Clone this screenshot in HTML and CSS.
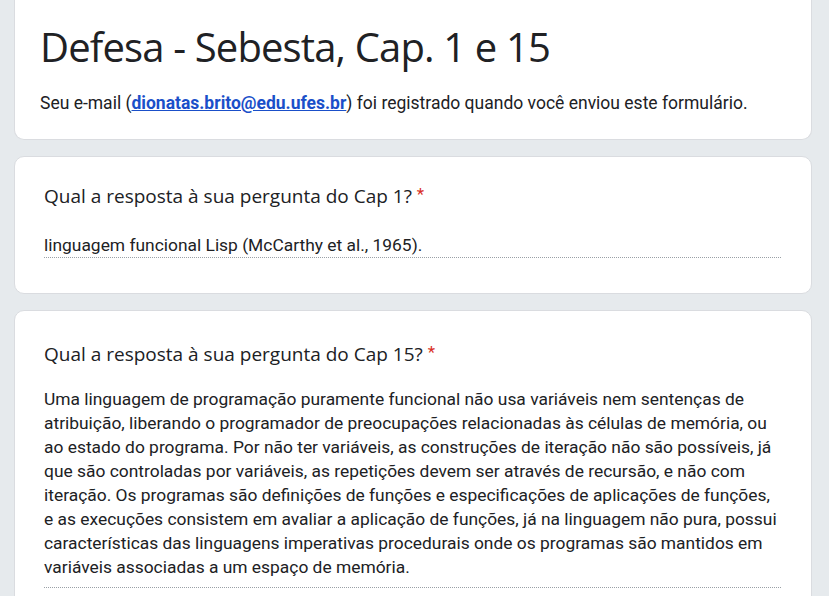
FILE: index.html
```html
<!DOCTYPE html>
<html lang="pt">
<head>
<meta charset="utf-8">
<title>Defesa - Sebesta, Cap. 1 e 15</title>
<link rel="stylesheet" href="styles.css">
</head>
<body>
<div class="page">
  <div class="card header-card">
    <h1 class="form-title">Defesa - Sebesta, Cap. 1 e 15</h1>
    <p class="form-note">Seu e-mail (<a class="email" href="#">dionatas.brito@edu.ufes.br</a>) foi registrado quando você enviou este formulário.</p>
  </div>
  <div class="card item-card">
    <div class="question">Qual a resposta à sua pergunta do Cap 1? <span class="req">*</span></div>
    <div class="answer answer-short">linguagem funcional Lisp (McCarthy et al., 1965).</div>
  </div>
  <div class="card item-card item-long">
    <div class="question">Qual a resposta à sua pergunta do Cap 15? <span class="req">*</span></div>
    <div class="answer answer-long">Uma linguagem de programação puramente funcional não usa variáveis nem sentenças de atribuição, liberando o programador de preocupações relacionadas às células de memória, ou ao estado do programa. Por não ter variáveis, as construções de iteração não são possíveis, já que são controladas por variáveis, as repetições devem ser através de recursão, e não com iteração. Os programas são definições de funções e especificações de aplicações de funções, e as execuções consistem em avaliar a aplicação de funções, já na linguagem não pura, possui características das linguagens imperativas procedurais onde os programas são mantidos em variáveis associadas a um espaço de memória.</div>
  </div>
</div>
</body>
</html>
```
FILE: styles.css
```css
html, body {
  margin: 0;
  padding: 0;
  background: #e6eaed;
  height: 100%;
  overflow: hidden;
}

.page {
  display: flex;
  flex-direction: column;
  gap: 16px;
  padding: 0 17px 0 14px;
}

.card {
  background: #ffffff;
  border: 1px solid #dadce0;
  border-radius: 10px;
}

.header-card {
  border-top: 0;
  border-top-left-radius: 0;
  border-top-right-radius: 0;
  padding: 22px 30px 24px 25px;
}

.form-title {
  margin: 0;
  font-family: "Open Sans", sans-serif;
  font-weight: 400;
  font-size: 40px;
  line-height: 50px;
  color: #202124;
  letter-spacing: -0.85px;
}

.form-note {
  margin: 19px 0 0;
  font-family: Roboto, "Liberation Sans", sans-serif;
  font-size: 17.5px;
  line-height: 24px;
  color: #202124;
}

.email {
  color: #1a4fc9;
  font-weight: 700;
  text-decoration: underline;
}

.item-card {
  padding: 24px 30px 35px 29px;
}

.question {
  font-family: "Open Sans", sans-serif;
  font-size: 19px;
  line-height: 30px;
  color: #202124;
}

.req {
  color: #d93025;
  font-family: Roboto, "Liberation Sans", sans-serif;
  font-size: 17px;
  vertical-align: top;
  line-height: 26px;
}

.answer {
  font-family: Roboto, "Liberation Sans", sans-serif;
  font-size: 17.4px;
  line-height: 24px;
  color: #202124;
  border-bottom: 1px dotted #9aa0a6;
}

.answer-short {
  margin-top: 22px;
  padding-bottom: 0;
}

.item-long {
  padding-top: 28px;
}

.answer-long {
  margin-top: 18px;
  padding-bottom: 8px;
}
```
